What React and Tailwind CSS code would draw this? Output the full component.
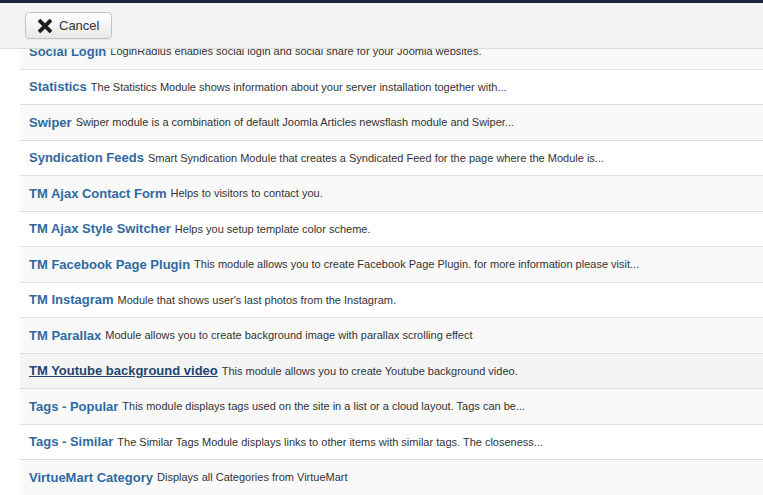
import React from "react";

const modules = [
  { name: "Social Login", desc: "LoginRadius enables social login and social share for your Joomla websites." },
  { name: "Statistics", desc: "The Statistics Module shows information about your server installation together with..." },
  { name: "Swiper", desc: "Swiper module is a combination of default Joomla Articles newsflash module and Swiper..." },
  { name: "Syndication Feeds", desc: "Smart Syndication Module that creates a Syndicated Feed for the page where the Module is..." },
  { name: "TM Ajax Contact Form", desc: "Helps to visitors to contact you." },
  { name: "TM Ajax Style Switcher", desc: "Helps you setup template color scheme." },
  { name: "TM Facebook Page Plugin", desc: "This module allows you to create Facebook Page Plugin. for more information please visit..." },
  { name: "TM Instagram", desc: "Module that shows user's last photos from the Instagram." },
  { name: "TM Parallax", desc: "Module allows you to create background image with parallax scrolling effect" },
  { name: "TM Youtube background video", desc: "This module allows you to create Youtube background video.", hover: true },
  { name: "Tags - Popular", desc: "This module displays tags used on the site in a list or a cloud layout. Tags can be..." },
  { name: "Tags - Similar", desc: "The Similar Tags Module displays links to other items with similar tags. The closeness..." },
  { name: "VirtueMart Category", desc: "Displays all Categories from VirtueMart" },
  { name: "VirtueMart Currency Selector", desc: "Displays a currency selector" },
];

const CancelIcon = () => (
  <svg width="14" height="14" viewBox="0 0 14 14" className="shrink-0">
    <path d="M2.3 2.3 L11.7 11.7 M11.7 2.3 L2.3 11.7" stroke="#1e1e1e" strokeWidth="3.8" strokeLinecap="square" />
  </svg>
);

const App = () => {
  return (
    <div className="h-[495px] w-[763px] overflow-hidden flex flex-col bg-white font-['Liberation_Sans',Arial,sans-serif]">
      <div className="h-[3px] bg-[#1a2539] shrink-0" />
      {/* toolbar */}
      <div className="h-[46px] shrink-0 bg-[#f3f3f4] border-b border-[#dcdcdc] flex items-center pl-[25px] relative z-10">
        <button className="h-[27px] pl-[12px] pr-[12px] flex items-center gap-[7px] rounded-[4px] border border-[#c4c4c4] bg-gradient-to-b from-white to-[#e8e8e8] shadow-[inset_0_1px_0_rgba(255,255,255,0.6),0_1px_2px_rgba(0,0,0,0.05)] text-[13px] text-[#333]">
          <CancelIcon />
          <span>Cancel</span>
        </button>
      </div>
      {/* list, scrolled down a little under the toolbar */}
      <div className="flex-1 overflow-hidden pl-[20px]">
        <div className="-mt-[16px]">
          {modules.map((m, i) => (
            <div
              key={m.name}
              className={`h-[35.5px] border-t border-[#dddddd] flex items-center pl-[9px] whitespace-nowrap ${
                m.hover ? "bg-[#f4f4f4]" : i % 2 === 0 ? "bg-[#f9f9f9]" : "bg-white"
              }`}
            >
              <a
                href="#"
                className={`text-[13px] font-bold ${
                  m.hover ? "text-[#21476e] underline" : "text-[#3069a0]"
                }`}
              >
                {m.name}
              </a>
              <span className="text-[11px] text-[#333] ml-[4px]">{m.desc}</span>
            </div>
          ))}
        </div>
      </div>
    </div>
  );
};

export default App;
